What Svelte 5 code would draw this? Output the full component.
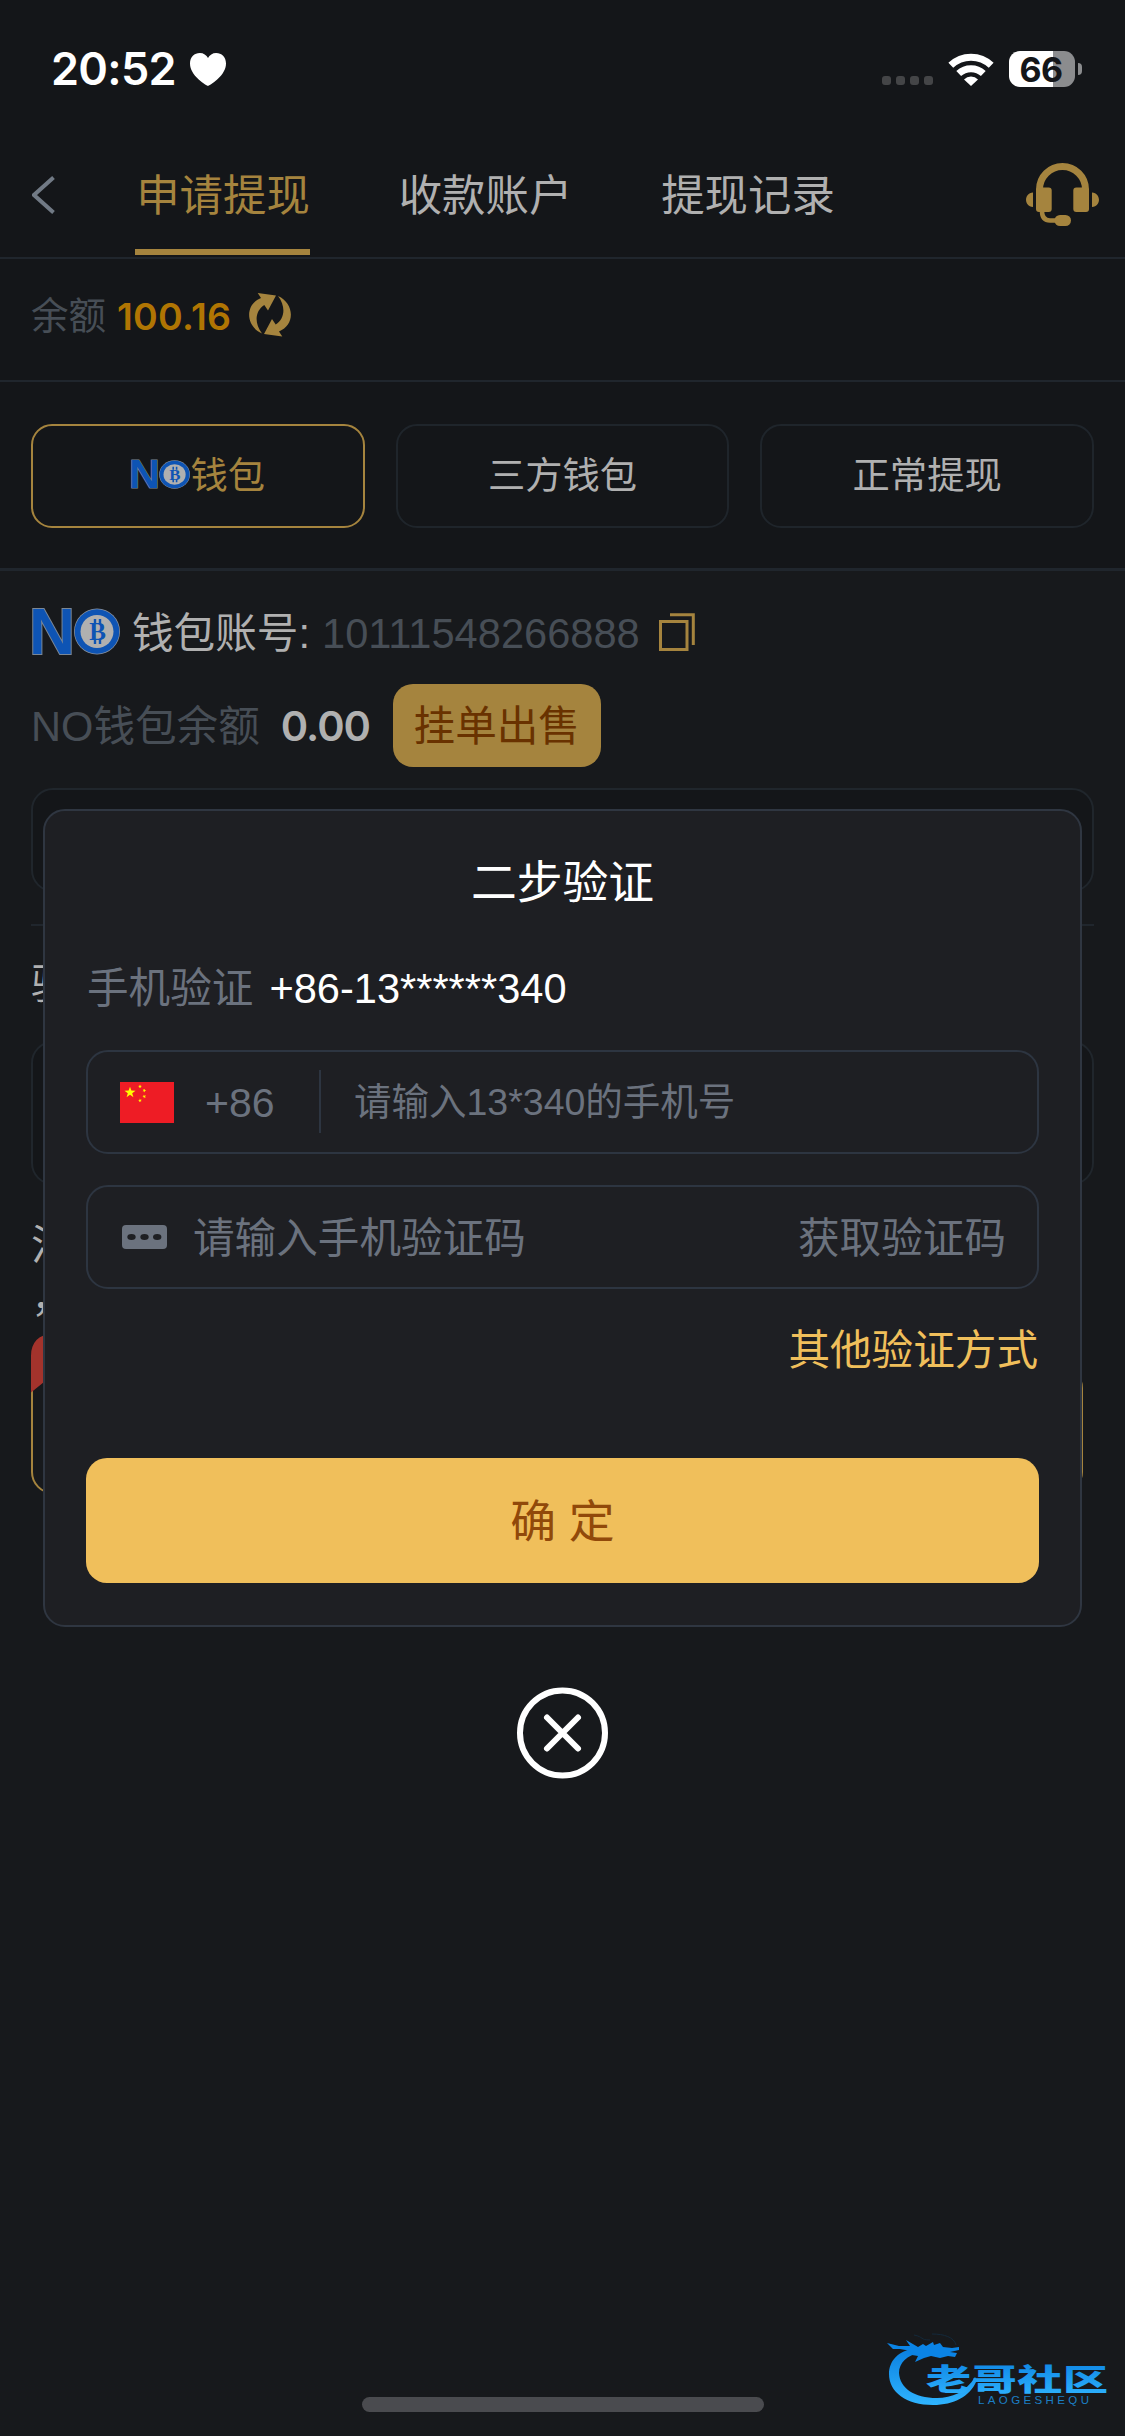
<script>
  const tabs = ['申请提现', '收款账户', '提现记录'];
  const wallets = ['钱包', '三方钱包', '正常提现'];
  let activeTab = 0;
  let activeWallet = 0;
  let open = true;

  const balance = '100.16';
  const account = '10111548266888';

  // star points for the flag
  function star(cx, cy, r, turn = 0) {
    let pts = [];
    for (let i = 0; i < 10; i++) {
      const a = (Math.PI / 5) * i - Math.PI / 2 + turn;
      const d = i % 2 ? r * 0.4 : r;
      pts.push(`${(cx + d * Math.cos(a)).toFixed(2)},${(cy + d * Math.sin(a)).toFixed(2)}`);
    }
    return pts.join(' ');
  }

  const smallStars = [[20, 4.5], [24.3, 8.5], [24.3, 14.5], [20, 18.5]];
</script>

{#snippet logo()}
  <svg class="logo" viewBox="0 0 88 47" preserveAspectRatio="none">
    <text x="-3" y="46" font-size="65" font-weight="700" textLength="46" lengthAdjust="spacingAndGlyphs" fill="#0e54b4" stroke="#7b8795" stroke-width="2" paint-order="stroke" font-family="Liberation Sans, sans-serif">N</text>
    <circle cx="65" cy="23.5" r="23" fill="#8b939f" />
    <circle cx="65" cy="23.5" r="22.3" fill="#0e54b4" />
    <circle cx="65" cy="23.5" r="16.5" fill="#b0b0b0" />
    <text x="65.5" y="31.7" font-size="25" font-weight="700" text-anchor="middle" fill="#0e54b4" font-family="Liberation Serif, serif">B</text>
    <path d="M63 11v5M68 11v5M63 31v5M68 31v5" stroke="#0e54b4" stroke-width="2.4" />
  </svg>
{/snippet}

<div class="page">
  <div class="status">
    <span class="time">20:52</span>
    <svg class="heart" width="36" height="33" viewBox="0 0 36 33">
      <path d="M18 33C14 31 0 22 0 10.500C0 4 4.500 0 9.800 0C13.500 0 16.500 2 18 5C19.500 2 22.500 0 26.200 0C31.500 0 36 4 36 10.500C36 22 22 31 18 33Z" fill="#fff" />
    </svg>
    <div class="signal"><i></i><i></i><i></i><i></i></div>
    <svg class="wifi" width="46" height="33" viewBox="0 0 46 33" fill="none" stroke="#fff" stroke-width="7">
      <path d="M2.800 12.300A29.300 29.300 0 0 1 43.200 12.300" />
      <path d="M10.700 20.500A18 18 0 0 1 35.300 20.500" />
      <path d="M23 33L16 26.400A9.800 9.800 0 0 1 30 26.400Z" fill="#fff" stroke="none" />
    </svg>
    <div class="battery"><span>66</span></div>
    <div class="battery-cap"></div>
  </div>

  <header>
    <svg class="back" width="24" height="38" viewBox="0 0 24 38">
      <path d="M21.500 1.500L2 19L21.500 36.500" fill="none" stroke="#717a85" stroke-width="4" />
    </svg>
    <nav>
      {#each tabs as tab, i}
        <div class="tab" class:active={i === activeTab}>{tab}</div>
      {/each}
    </nav>
    <svg class="service" width="73" height="63" viewBox="0 0 73 63" fill="#a5843e">
      <path d="M13.500 30V26.500A23 23 0 0 1 59.500 26.500V30" fill="none" stroke="#a5843e" stroke-width="7" />
      <rect x="10" y="24.500" width="15.700" height="24.500" rx="3" />
      <rect x="47.300" y="24.500" width="15.700" height="24.500" rx="3" />
      <path d="M7 29.500V44C-2.300 43 -2.300 30.500 7 29.500ZM66 29.500V44C75.300 43 75.300 30.500 66 29.500Z" />
      <path d="M16 48C16 55 19 57.500 24 57.500H32" fill="none" stroke="#a5843e" stroke-width="4.500" />
      <rect x="28.500" y="52" width="16.500" height="11" rx="5.500" />
    </svg>
  </header>

  <div class="balance">
    <span class="muted">余额</span>
    <b>{balance}</b>
    <svg width="42" height="44" viewBox="0 0 42 44" fill="#a5843e">
      <path d="M8.700 0L27 2.500L19 17.500L15.300 12C6 18 5 30 13 40.500C-4 33 -4 11 12 5Z" />
      <path transform="rotate(180 21 21.700)" d="M8.700 0L27 2.500L19 17.500L15.300 12C6 18 5 30 13 40.500C-4 33 -4 11 12 5Z" />
    </svg>
  </div>

  <div class="wallets">
    {#each wallets as wallet, i}
      <div class="wallet" class:active={i === activeWallet}>
        {#if i === 0}{@render logo()}{/if}<span>{wallet}</span>
      </div>
    {/each}
  </div>

  <main>
    <div class="account">
      {@render logo()}
      <span class="label">钱包账号:</span>
      <span class="muted">{account}</span>
      <svg class="copy" width="36" height="38" viewBox="0 0 36 38" fill="none" stroke="#a5843e" stroke-width="3">
        <rect x="1.500" y="8.500" width="26.500" height="28" />
        <path d="M11 1.800H34.300V32" />
      </svg>
    </div>
    <div class="funds">
      <span class="muted">NO钱包余额</span>
      <b>0.00</b>
      <div class="sell">挂单出售</div>
    </div>
    <div class="field"></div>
    <div class="verify">验</div>
    <div class="field tall"></div>
    <p class="note">注<br />，</p>
    <div class="offer">
      <svg class="ribbon" width="120" height="60" viewBox="0 0 120 60">
        <path d="M0 58.500V22C0 8 8 0 22 0H120V2H70Z" fill="#a3332c" />
      </svg>
    </div>
  </main>

  {#if open}
    <div class="overlay">
      <div class="modal">
        <h2>二步验证</h2>
        <div class="phone"><span>手机验证</span><strong>+86-13******340</strong></div>
        <div class="input">
          <svg class="flag" width="54" height="41" viewBox="0 0 54 41">
            <rect width="54" height="41" fill="#ee1c25" />
            <polygon points={star(10, 10.5, 5.8)} fill="#ff0" />
            {#each smallStars as [x, y], i}
              <polygon points={star(x, y, 2, i * 0.4)} fill="#ff0" />
            {/each}
          </svg>
          <span class="code">+86</span>
          <span class="placeholder">请输入13*340的手机号</span>
        </div>
        <div class="input sms">
          <svg width="45" height="24" viewBox="0 0 45 24">
            <rect width="45" height="24" rx="4" fill="#6b727e" />
            <g fill="#1e1f23">
              <ellipse cx="9.500" cy="12" rx="4.200" ry="3" />
              <ellipse cx="22.500" cy="12" rx="4.200" ry="3" />
              <ellipse cx="35.200" cy="12" rx="4.200" ry="3" />
            </g>
          </svg>
          <span>请输入手机验证码</span>
          <span class="send">获取验证码</span>
        </div>
        <div class="other">其他验证方式</div>
        <button class="confirm">确 定</button>
      </div>
      <svg class="close" width="91" height="92" viewBox="0.5 0 91 92" fill="none" stroke="#fff" stroke-width="6">
        <circle cx="46" cy="46" r="42.500" />
        <path d="M30.500 30.500L61.500 61.500M61.500 30.500L30.500 61.500" stroke-linecap="round" />
      </svg>
    </div>
  {/if}

  <svg class="watermark" width="225" height="80" viewBox="0 0 225 80">
    <defs>
      <linearGradient id="blue" x1="0" y1="0" x2="0" y2="1">
        <stop offset="0" stop-color="#0a7fe0" />
        <stop offset="1" stop-color="#2fb4ff" />
      </linearGradient>
    </defs>
    <g transform="translate(-1 5)">
      <path d="M29 8C12 11 3 21 3 34C3 52 20 65 47 65C68 65 84 56 90 42C90 40 90 38 89 37C80 52 66 58 51 58C28 58 14 48 13 33C13 23 21 15 34 13Z" fill="url(#blue)" transform="translate(0 -3)" />
      <path d="M1 0L13 3L24 3L20 -3L32 4L37 1L40 3L47 -1L48 2L54 0L57 4L66 5L73 4L73 7L64 9L71 10L69 14L62 13L54 15L45 13L38 15L29 19L32 13L20 11L25 8L14 6L7 6Z" fill="#0b84e6" />
      <path d="M28 -8C38 -6 34 -3 44 -3M46 -9C58 -9 68 -6 70 2" fill="none" stroke="#14293b" stroke-width="1" />
    </g>
    <text transform="translate(39 51.5) scale(1 .66)" font-size="45" font-weight="900" textLength="182" fill="url(#blue)">老哥社区</text>
    <text x="91" y="65.500" font-size="11.500" textLength="111" fill="#1c7fc4" font-family="Liberation Sans, sans-serif">LAOGESHEQU</text>
  </svg>
  <div class="home"></div>
</div>

<style>
  :global(body) {
    margin: 0;
    background: #17191c;
  }

  .page {
    position: relative;
    width: 1125px;
    height: 2436px;
    overflow: hidden;
    box-sizing: border-box;
    background: #17191c;
    color: #b0b0b0;
    font-family: 'Liberation Sans', 'Noto Sans CJK SC', sans-serif;
    font-size: 41.6px;
    line-height: 1.2;
    white-space: nowrap;
  }

  .page * {
    box-sizing: border-box;
  }

  svg {
    display: block;
    flex: none;
  }

  .muted {
    color: #474e56;
  }

  .status {
    display: flex;
    align-items: center;
    height: 138px;
    padding: 0 43px 0 51px;
    background: #141619;
    color: #fff;
  }

  .time {
    width: 139px;
    font-family: Inter, sans-serif;
    font-size: 45px;
    font-weight: 600;
    letter-spacing: -0.700px;
  }

  .signal {
    display: flex;
    gap: 5px;
    margin: 23px 15px 0 auto;
  }

  .signal i {
    width: 9px;
    height: 9px;
    border-radius: 3px;
    background: #444547;
  }

  .battery {
    width: 66px;
    height: 36px;
    margin-left: 15px;
    border-radius: 11px;
    background: linear-gradient(90deg, #fff 66%, #8b8c8e 66%);
    color: #141619;
    font: 700 34px/37px Inter, sans-serif;
    text-align: center;
    letter-spacing: -0.500px;
  }

  .battery span {
    margin-left: -2px;
  }

  .battery-cap {
    width: 4px;
    height: 12px;
    margin-left: 3px;
    border-radius: 0 6px 6px 0;
    background: #8b8c8e;
  }

  header {
    display: flex;
    align-items: center;
    height: 121px;
    padding: 0 26px 0 32px;
    border-bottom: 2px solid #20262d;
    background: #141619;
  }

  .back {
    margin-top: -6px;
  }

  nav {
    display: flex;
    gap: 87.500px;
    height: 117px;
    margin-left: 79px;
    margin-bottom: 2px;
  }

  .tab {
    width: 175px;
    padding: 3px 0 0 1px;
    border-bottom: 6px solid transparent;
    font-size: 43.400px;
    line-height: 110px;
    text-align: center;
  }

  .tab.active {
    border-color: #a5843e;
    color: #a5843e;
  }

  .service {
    margin: -7px 0 0 auto;
  }

  .balance {
    display: flex;
    align-items: center;
    height: 123px;
    padding: 0 31px 10px;
    border-bottom: 2px solid #20262d;
    background: #141619;
    font-size: 37.500px;
  }

  .balance span {
    padding-top: 3px;
  }

  .balance b {
    margin: 4px 18px 0 11px;
    color: #b07503;
    font-family: Inter, sans-serif;
    font-weight: 600;
    letter-spacing: 0.250px;
  }

  .wallets {
    display: grid;
    grid-template-columns: repeat(3, 1fr);
    gap: 31px;
    height: 189px;
    padding: 42px 31px 40px;
    border-bottom: 3px solid #20262d;
    background: #141619;
  }

  .wallet {
    display: flex;
    align-items: center;
    justify-content: center;
    height: 104px;
    border: 2px solid #1f252b;
    border-radius: 21px;
    font-size: 37.300px;
  }

  .wallet.active {
    border-color: #a5843e;
    color: #a5843e;
  }

  .logo {
    overflow: visible;
  }

  .wallet .logo {
    width: 59px;
    height: 29px;
    margin: -4px 1px 0 0;
  }

  main {
    padding: 33px 31px 0;
  }

  .account {
    display: flex;
    align-items: center;
    height: 56px;
  }

  .account .logo {
    width: 88px;
    height: 47px;
    margin: -2px 0 0 1px;
  }

  .account span {
    padding-top: 3px;
  }

  .label {
    width: 190px;
    margin-left: 12px;
  }

  .copy {
    margin-left: 19px;
  }

  .funds {
    display: flex;
    align-items: center;
    height: 83px;
    margin-top: 24px;
  }

  .funds span {
    padding-top: 3px;
  }

  .funds b {
    width: 112px;
    margin-left: 21px;
    padding-top: 2px;
    font-family: Inter, sans-serif;
    font-weight: 600;
    letter-spacing: -1px;
  }

  .sell {
    width: 208px;
    height: 83px;
    border-radius: 20px;
    background: #a5843e;
    color: #693200;
    line-height: 86px;
    text-align: center;
  }

  .field {
    height: 104px;
    margin-top: 21px;
    border: 2px solid #20262c;
    border-radius: 22px;
    background: #141619;
  }

  .verify {
    margin-top: 32px;
    padding-top: 34px;
    height: 96px;
    border-top: 2px solid #20262d;
  }

  .field.tall {
    height: 144px;
  }

  .note {
    height: 131px;
    margin: 32px 0 0;
    padding-top: 3px;
    line-height: 52px;
  }

  .offer {
    width: 1052px;
    height: 128px;
    margin-top: 18px;
    border: 2px solid #a5843e;
    border-radius: 22px;
  }

  .ribbon {
    position: relative;
    top: -34px;
    left: -2px;
  }

  .overlay {
    position: absolute;
    top: 809px;
    left: 43px;
    width: 1039px;
  }

  .modal {
    height: 818px;
    padding: 41px 41px 0;
    border: 2px solid #2f3641;
    border-radius: 22px;
    background: #1e1f23;
    color: #6b727e;
  }

  h2 {
    margin: 0;
    height: 62px;
    color: #fff;
    font-size: 45.800px;
    font-weight: 400;
    line-height: 64px;
    text-align: center;
  }

  .phone {
    display: flex;
    align-items: center;
    height: 60px;
    margin: 45px 0 31px;
  }

  .phone span {
    padding-left: 1px;
  }

  .phone strong {
    margin-left: 16px;
    color: #fff;
    font-weight: 400;
  }

  .input {
    display: flex;
    align-items: center;
    height: 104px;
    padding: 0 33px 0 32px;
    border: 2px solid #2d3541;
    border-radius: 22px;
  }

  .code {
    width: 147px;
    height: 63px;
    margin-top: -2px;
    padding-left: 31px;
    border-right: 2px solid #2d3541;
    font-size: 41px;
    line-height: 66px;
  }

  .placeholder {
    margin-left: 33px;
    font-size: 37.500px;
  }

  .sms {
    margin-top: 31px;
    padding: 0 31px 0 34px;
  }

  .sms span {
    margin-left: 26px;
    padding-top: 3px;
  }

  .sms .send {
    margin-left: auto;
  }

  .other {
    height: 60px;
    margin: 32px 1px 77px 0;
    color: #f0bf5b;
    line-height: 60px;
    text-align: right;
  }

  .confirm {
    display: block;
    width: 100%;
    height: 125px;
    padding: 0 0 5px;
    border: 0;
    border-radius: 21px;
    background: #f0bf5b;
    color: #91490a;
    font-family: inherit;
    font-size: 45.800px;
  }

  .close {
    margin: 60px auto 0;
  }

  .watermark {
    position: absolute;
    right: 13px;
    bottom: 18px;
    overflow: visible;
    font-family: 'Noto Sans CJK SC', sans-serif;
  }

  .home {
    position: absolute;
    bottom: 24px;
    left: 362px;
    width: 402px;
    height: 15px;
    border-radius: 8px;
    background: #4a4b4f;
  }
</style>
